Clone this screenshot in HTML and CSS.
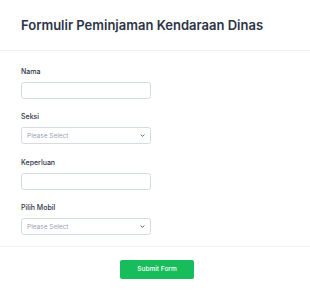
FILE: index.html
```html
<!DOCTYPE html>
<html lang="id">
<head>
    <meta charset="UTF-8">
    <title>Formulir Peminjaman Kendaraan Dinas</title>
    <link rel="stylesheet" href="styles.css">
</head>
<body>
    <header class="form-header">
        <h1>Formulir Peminjaman Kendaraan Dinas</h1>
    </header>

    <form class="form-body">
        <div class="field">
            <label class="label" for="nama">Nama</label>
            <input type="text" id="nama" class="control">
        </div>

        <div class="field">
            <label class="label" for="seksi">Seksi</label>
            <div class="select control">
                <span>Please Select</span>
                <svg width="5" height="3" viewBox="0 0 5 3"><path d="M0.6 0.6 L2.5 2.3 L4.4 0.6" fill="none" stroke="#4b5563" stroke-width="0.9"/></svg>
            </div>
        </div>

        <div class="field">
            <label class="label" for="keperluan">Keperluan</label>
            <input type="text" id="keperluan" class="control">
        </div>

        <div class="field">
            <label class="label" for="mobil">Pilih Mobil</label>
            <div class="select control">
                <span>Please Select</span>
                <svg width="5" height="3" viewBox="0 0 5 3"><path d="M0.6 0.6 L2.5 2.3 L4.4 0.6" fill="none" stroke="#4b5563" stroke-width="0.9"/></svg>
            </div>
        </div>
    </form>

    <div class="form-footer">
        <button type="button" class="submit">Submit Form</button>
    </div>
</body>
</html>
```

FILE: styles.css
```css
body {
    font-family: Inter, "Noto Sans", sans-serif;
    margin: 0;
    padding: 0;
    background-color: white;
    color: #2c3345;
}
.form-header {
    padding: 17px 21px;
    border-bottom: 1px solid #f0f1f5;
}
.form-header h1 {
    margin: 0;
    font-size: 13px;
    line-height: 16px;
    font-weight: 600;
    color: #2c3345;
}
.form-body {
    padding: 16px 21px 0;
    border-bottom: 1px solid #f0f1f5;
}
.field {
    padding-bottom: 13.4px;
}
.field:last-child {
    padding-bottom: 10.5px;
}
.label {
    display: block;
    font-size: 7px;
    line-height: 9px;
    font-weight: 500;
    margin-bottom: 6px;
    color: #2c3345;
}
.control {
    display: block;
    box-sizing: border-box;
    width: 130px;
    height: 17px;
    margin: 0;
    padding: 0 5px;
    border: 1px solid #d6dae3;
    border-radius: 2.5px;
    background-color: white;
}
.select {
    display: flex;
    align-items: center;
    justify-content: space-between;
    padding: 0 5px 0 5px;
    font-size: 6.5px;
    color: #9ba1b4;
}
.form-footer {
    display: flex;
    justify-content: center;
    padding: 13px 0 0 4px;
}
.submit {
    width: 74px;
    height: 19px;
    padding: 0;
    border: none;
    border-radius: 2px;
    background-color: #18bd5b;
    color: white;
    font-family: Inter, "Noto Sans", sans-serif;
    font-size: 6.5px;
    font-weight: 500;
}
```
